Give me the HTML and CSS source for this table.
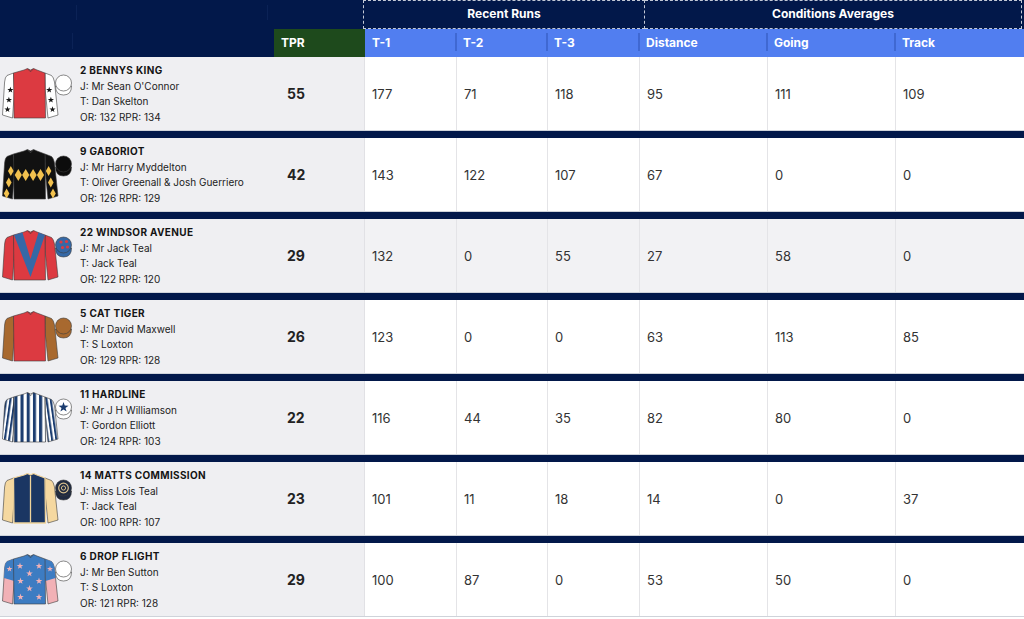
FILE: index.html
```html
<!DOCTYPE html>
<html lang="en">
<head>
<meta charset="utf-8">
<title>Runners</title>
<link rel="stylesheet" href="styles.css">
</head>
<body>
<svg class="defs" width="0" height="0" aria-hidden="true">
  <defs>
    <polygon id="star" points="0,-2.4 0.56,-0.77 2.28,-0.74 0.9,0.29 1.41,1.94 0,0.95 -1.41,1.94 -0.9,0.29 -2.28,-0.74 -0.56,-0.77"/>
    <pattern id="stripeB" patternUnits="userSpaceOnUse" x="12.3" y="0" width="6.2" height="60"><rect width="3.1" height="60" fill="#1c3d70"/></pattern>
    <pattern id="stripeL" patternUnits="userSpaceOnUse" width="4.2" height="60" patternTransform="rotate(8)"><rect width="2.1" height="60" fill="#1c3d70"/></pattern>
    <pattern id="stripeR" patternUnits="userSpaceOnUse" width="4.2" height="60" patternTransform="rotate(-8)"><rect width="2.1" height="60" fill="#1c3d70"/></pattern>
  </defs>
</svg>

<div class="board">
  <div class="groups">
    <div class="g-blank">
      <div class="g-part p1"></div>
      <div class="g-part p2"></div>
      <div class="g-part p3"></div>
    </div>
    <div class="group recent">Recent Runs</div>
    <div class="group cond">Conditions Averages</div>
  </div>

  <div class="grid cols">
    <div class="hc lead"><span class="hpart a"></span><span class="hpart b"></span></div>
    <div class="hc tpr">TPR</div>
    <div class="hc blue">T-1</div>
    <div class="hc blue sepl">T-2</div>
    <div class="hc blue sepl">T-3</div>
    <div class="hc blue sepl">Distance</div>
    <div class="hc blue sepl">Going</div>
    <div class="hc blue sepl">Track</div>
  </div>

  <!-- 1 -->
  <div class="grid row">
    <div class="lead-cell">
      <svg class="silk" viewBox="0 0 72 52" width="72" height="52">
        <g stroke="#3c3c3c" stroke-width=".6" stroke-linejoin="round">
          <path d="M11.5,5 L5,7.5 Q3,9 2.6,14 L0.5,47 L10.5,50 L12.5,22 Z" fill="#fff"/>
          <path d="M43,5 L49.5,7.5 Q51.5,9 52.5,14 L56,47 L46,50 L43.2,22 Z" fill="#fff"/>
          <path d="M11.5,5 L22,2 L25.5,0.5 L28.5,2 L31.5,0.5 L35,2 L43,5 L43.5,50 L12,50 Z" fill="#dc3a41"/>
          <path d="M25.5,0.8 L28.5,3.8 L31.5,0.8" fill="none"/>
          <path d="M53.5,18 Q53.5,27 61.5,27 Q69.5,27 69.5,18 Z" fill="#fff"/>
          <circle cx="61.5" cy="15" r="8" fill="#fff"/>
        </g>
        <g fill="#151515">
          <use href="#star" transform="translate(8.4 22) scale(1.35)"/>
          <use href="#star" transform="translate(6.9 32) scale(1.35)"/>
          <use href="#star" transform="translate(5.5 41.5) scale(1.35)"/>
          <use href="#star" transform="translate(47.2 22) scale(1.35)"/>
          <use href="#star" transform="translate(48.9 32) scale(1.35)"/>
          <use href="#star" transform="translate(50.5 41.5) scale(1.35)"/>
        </g>
      </svg>
      <div class="info">
        <span class="name">2 BENNYS KING</span>
        <span>J: Mr Sean O'Connor</span>
        <span>T: Dan Skelton</span>
        <span>OR: 132 RPR: 134</span>
      </div>
    </div>
    <div class="tpr-cell">55</div>
    <div class="val first">177</div>
    <div class="val">71</div>
    <div class="val">118</div>
    <div class="val">95</div>
    <div class="val">111</div>
    <div class="val">109</div>
  </div>
  <div class="sep"></div>

  <!-- 2 -->
  <div class="grid row">
    <div class="lead-cell">
      <svg class="silk" viewBox="0 0 72 52" width="72" height="52">
        <g stroke="#3c3c3c" stroke-width=".6" stroke-linejoin="round">
          <path d="M11.5,5 L5,7.5 Q3,9 2.6,14 L0.5,47 L10.5,50 L12.5,22 Z" fill="#111"/>
          <path d="M43,5 L49.5,7.5 Q51.5,9 52.5,14 L56,47 L46,50 L43.2,22 Z" fill="#111"/>
          <path d="M11.5,5 L22,2 L25.5,0.5 L28.5,2 L31.5,0.5 L35,2 L43,5 L43.5,50 L12,50 Z" fill="#111"/>
          <path d="M25.5,0.8 L28.5,3.8 L31.5,0.8" fill="none" stroke="#555"/>
          <path d="M53.5,18 Q53.5,27 61.5,27 Q69.5,27 69.5,18 Z" fill="#0c0c0c"/>
          <circle cx="61.5" cy="15" r="8" fill="#0c0c0c"/>
        </g>
        <g fill="#f2c14e">
          <path d="M16.3,20 L19.9,26 L16.3,32 L12.7,26 Z"/>
          <path d="M23.7,20 L27.3,26 L23.7,32 L20.1,26 Z"/>
          <path d="M31.1,20 L34.7,26 L31.1,32 L27.5,26 Z"/>
          <path d="M38.5,20 L42.1,26 L38.5,32 L34.9,26 Z"/>
          <path d="M8.8,17 L11.6,22 L8.8,27 L6,22 Z"/>
          <path d="M6.8,28.5 L9.6,33.5 L6.8,38.5 L4,33.5 Z"/>
          <path d="M4.6,39.5 L7.4,44.5 L4.6,49.5 L1.8,44.5 Z"/>
          <path d="M46.6,17 L49.4,22 L46.6,27 L43.8,22 Z"/>
          <path d="M48.8,28.5 L51.6,33.5 L48.8,38.5 L46,33.5 Z"/>
          <path d="M51,39.5 L53.8,44.5 L51,49.5 L48.2,44.5 Z"/>
        </g>
      </svg>
      <div class="info">
        <span class="name">9 GABORIOT</span>
        <span>J: Mr Harry Myddelton</span>
        <span>T: Oliver Greenall &amp; Josh Guerriero</span>
        <span>OR: 126 RPR: 129</span>
      </div>
    </div>
    <div class="tpr-cell">42</div>
    <div class="val first">143</div>
    <div class="val">122</div>
    <div class="val">107</div>
    <div class="val">67</div>
    <div class="val">0</div>
    <div class="val">0</div>
  </div>
  <div class="sep"></div>

  <!-- 3 -->
  <div class="grid row hover">
    <div class="lead-cell">
      <svg class="silk" viewBox="0 0 72 52" width="72" height="52">
        <g stroke="#3c3c3c" stroke-width=".6" stroke-linejoin="round">
          <path d="M11.5,5 L5,7.5 Q3,9 2.6,14 L0.5,47 L10.5,50 L12.5,22 Z" fill="#dc3a41"/>
          <path d="M43,5 L49.5,7.5 Q51.5,9 52.5,14 L56,47 L46,50 L43.2,22 Z" fill="#dc3a41"/>
          <path d="M11.5,5 L22,2 L25.5,0.5 L28.5,2 L31.5,0.5 L35,2 L43,5 L43.5,50 L12,50 Z" fill="#dc3a41"/>
          <path d="M12,5 L20.5,2.4 L28.5,29 L36.5,2.4 L43,5 L28.5,47 Z" fill="#3568a6" stroke="none"/>
          <path d="M25.5,0.8 L28.5,3.8 L31.5,0.8" fill="none"/>
          <path d="M53.5,18 Q53.5,27 61.5,27 Q69.5,27 69.5,18 Z" fill="#3568a6"/>
          <circle cx="61.5" cy="15" r="8" fill="#3568a6"/>
        </g>
        <g fill="#dc3a41">
          <circle cx="59" cy="12" r="1.6"/>
          <circle cx="64.5" cy="11.5" r="1.6"/>
          <circle cx="60.5" cy="17.5" r="1.6"/>
          <circle cx="65.5" cy="17" r="1.6"/>
        </g>
      </svg>
      <div class="info">
        <span class="name">22 WINDSOR AVENUE</span>
        <span>J: Mr Jack Teal</span>
        <span>T: Jack Teal</span>
        <span>OR: 122 RPR: 120</span>
      </div>
    </div>
    <div class="tpr-cell">29</div>
    <div class="val first">132</div>
    <div class="val">0</div>
    <div class="val">55</div>
    <div class="val">27</div>
    <div class="val">58</div>
    <div class="val">0</div>
  </div>
  <div class="sep"></div>

  <!-- 4 -->
  <div class="grid row">
    <div class="lead-cell">
      <svg class="silk" viewBox="0 0 72 52" width="72" height="52">
        <g stroke="#3c3c3c" stroke-width=".6" stroke-linejoin="round">
          <path d="M11.5,5 L5,7.5 Q3,9 2.6,14 L0.5,47 L10.5,50 L12.5,22 Z" fill="#a8692f"/>
          <path d="M43,5 L49.5,7.5 Q51.5,9 52.5,14 L56,47 L46,50 L43.2,22 Z" fill="#a8692f"/>
          <path d="M11.5,5 L22,2 L25.5,0.5 L28.5,2 L31.5,0.5 L35,2 L43,5 L43.5,50 L12,50 Z" fill="#dc3a41"/>
          <path d="M25.5,0.8 L28.5,3.8 L31.5,0.8" fill="none"/>
          <path d="M53.5,18 Q53.5,27 61.5,27 Q69.5,27 69.5,18 Z" fill="#a8692f"/>
          <circle cx="61.5" cy="15" r="8" fill="#a8692f"/>
        </g>
      </svg>
      <div class="info">
        <span class="name">5 CAT TIGER</span>
        <span>J: Mr David Maxwell</span>
        <span>T: S Loxton</span>
        <span>OR: 129 RPR: 128</span>
      </div>
    </div>
    <div class="tpr-cell">26</div>
    <div class="val first">123</div>
    <div class="val">0</div>
    <div class="val">0</div>
    <div class="val">63</div>
    <div class="val">113</div>
    <div class="val">85</div>
  </div>
  <div class="sep"></div>

  <!-- 5 -->
  <div class="grid row">
    <div class="lead-cell">
      <svg class="silk" viewBox="0 0 72 52" width="72" height="52">
        <path d="M11.5,5 L5,7.5 Q3,9 2.6,14 L0.5,47 L10.5,50 L12.5,22 Z" fill="#fff"/>
        <path d="M43,5 L49.5,7.5 Q51.5,9 52.5,14 L56,47 L46,50 L43.2,22 Z" fill="#fff"/>
        <path d="M11.5,5 L22,2 L25.5,0.5 L28.5,2 L31.5,0.5 L35,2 L43,5 L43.5,50 L12,50 Z" fill="#fff"/>
        <g stroke="#3c3c3c" stroke-width=".6" stroke-linejoin="round">
          <path d="M11.5,5 L5,7.5 Q3,9 2.6,14 L0.5,47 L10.5,50 L12.5,22 Z" fill="url(#stripeL)"/>
          <path d="M43,5 L49.5,7.5 Q51.5,9 52.5,14 L56,47 L46,50 L43.2,22 Z" fill="url(#stripeR)"/>
          <path d="M11.5,5 L22,2 L25.5,0.5 L28.5,2 L31.5,0.5 L35,2 L43,5 L43.5,50 L12,50 Z" fill="url(#stripeB)"/>
          <path d="M25.5,0.8 L28.5,3.8 L31.5,0.8" fill="none"/>
          <path d="M53.5,18 Q53.5,27 61.5,27 Q69.5,27 69.5,18 Z" fill="#fff"/>
          <circle cx="61.5" cy="15" r="8" fill="#fff"/>
        </g>
        <use href="#star" fill="#1c3d70" transform="translate(61.5 15.3) scale(2.2)"/>
      </svg>
      <div class="info">
        <span class="name">11 HARDLINE</span>
        <span>J: Mr J H Williamson</span>
        <span>T: Gordon Elliott</span>
        <span>OR: 124 RPR: 103</span>
      </div>
    </div>
    <div class="tpr-cell">22</div>
    <div class="val first">116</div>
    <div class="val">44</div>
    <div class="val">35</div>
    <div class="val">82</div>
    <div class="val">80</div>
    <div class="val">0</div>
  </div>
  <div class="sep"></div>

  <!-- 6 -->
  <div class="grid row">
    <div class="lead-cell">
      <svg class="silk" viewBox="0 0 72 52" width="72" height="52">
        <g stroke="#3c3c3c" stroke-width=".6" stroke-linejoin="round">
          <path d="M11.5,5 L5,7.5 Q3,9 2.6,14 L0.5,47 L10.5,50 L12.5,22 Z" fill="#f5d8a0"/>
          <path d="M43,5 L49.5,7.5 Q51.5,9 52.5,14 L56,47 L46,50 L43.2,22 Z" fill="#f5d8a0"/>
          <path d="M11.5,5 L22,2 L25.5,0.5 L28.5,2 L31.5,0.5 L35,2 L43,5 L43.5,50 L12,50 Z" fill="#1b3663" stroke="#f0d39a" stroke-width="1.3"/>
          <path d="M28.5,3 L28.5,49.5" stroke="#f0d39a" stroke-width="1.3"/>
          <path d="M53.5,18 Q53.5,27 61.5,27 Q69.5,27 69.5,18 Z" fill="#1f2a40"/>
          <circle cx="61.5" cy="15" r="8" fill="#1f2a40"/>
        </g>
        <circle cx="61.5" cy="15" r="4.8" fill="none" stroke="#d9c08c" stroke-width="1.2"/>
        <circle cx="61.5" cy="15" r="2.1" fill="none" stroke="#d9c08c" stroke-width="1"/>
      </svg>
      <div class="info">
        <span class="name">14 MATTS COMMISSION</span>
        <span>J: Miss Lois Teal</span>
        <span>T: Jack Teal</span>
        <span>OR: 100 RPR: 107</span>
      </div>
    </div>
    <div class="tpr-cell">23</div>
    <div class="val first">101</div>
    <div class="val">11</div>
    <div class="val">18</div>
    <div class="val">14</div>
    <div class="val">0</div>
    <div class="val">37</div>
  </div>
  <div class="sep"></div>

  <!-- 7 -->
  <div class="grid row">
    <div class="lead-cell">
      <svg class="silk" viewBox="0 0 72 52" width="72" height="52">
        <g stroke="#3c3c3c" stroke-width=".6" stroke-linejoin="round">
          <path d="M11.5,5 L5,7.5 Q3,9 2.6,14 L0.5,47 L10.5,50 L12.5,22 Z" fill="#f1b1b6"/>
          <path d="M43,5 L49.5,7.5 Q51.5,9 52.5,14 L56,47 L46,50 L43.2,22 Z" fill="#f1b1b6"/>
          <path d="M11.5,5 L5,7.5 Q3,9 2.6,14 L2,24 L12.3,27 L12.5,22 Z" fill="#3d7cc2" stroke="none"/>
          <path d="M43,5 L49.5,7.5 Q51.5,9 52.5,14 L53.6,24 L43.4,27 L43.2,22 Z" fill="#3d7cc2" stroke="none"/>
          <path d="M11.5,5 L22,2 L25.5,0.5 L28.5,2 L31.5,0.5 L35,2 L43,5 L43.5,50 L12,50 Z" fill="#3d7cc2"/>
          <path d="M25.5,0.8 L28.5,3.8 L31.5,0.8" fill="none"/>
          <path d="M53.5,18 Q53.5,27 61.5,27 Q69.5,27 69.5,18 Z" fill="#fff"/>
          <circle cx="61.5" cy="15" r="8" fill="#fff"/>
        </g>
        <g fill="#f1b1b6">
          <use href="#star" transform="translate(18 12) scale(1.45)"/>
          <use href="#star" transform="translate(37 12) scale(1.45)"/>
          <use href="#star" transform="translate(27.5 19.5) scale(1.45)"/>
          <use href="#star" transform="translate(18.5 27) scale(1.45)"/>
          <use href="#star" transform="translate(37 27) scale(1.45)"/>
          <use href="#star" transform="translate(27.5 34.5) scale(1.45)"/>
          <use href="#star" transform="translate(18.5 43) scale(1.45)"/>
          <use href="#star" transform="translate(37 43) scale(1.45)"/>
          <use href="#star" transform="translate(7.5 15) scale(1.3)"/>
          <use href="#star" transform="translate(48 15) scale(1.3)"/>
        </g>
      </svg>
      <div class="info">
        <span class="name">6 DROP FLIGHT</span>
        <span>J: Mr Ben Sutton</span>
        <span>T: S Loxton</span>
        <span>OR: 121 RPR: 128</span>
      </div>
    </div>
    <div class="tpr-cell">29</div>
    <div class="val first">100</div>
    <div class="val">87</div>
    <div class="val">0</div>
    <div class="val">53</div>
    <div class="val">50</div>
    <div class="val">0</div>
  </div>
</div>
</body>
</html>
```

FILE: styles.css
```css
* { box-sizing: border-box; }

html, body {
  margin: 0;
  padding: 0;
  background: #ffffff;
}

body {
  font-family: "Inter", "Liberation Sans", Arial, sans-serif;
  color: #222;
}

.defs {
  display: block;
  width: 0;
  height: 0;
  overflow: hidden;
}

.board {
  width: 1024px;
}

/* ---------- header: groups ---------- */
.groups {
  display: flex;
  height: 29px;
  background: #02184a;
}

.g-blank {
  width: 363px;
  display: flex;
}

.g-part {
  height: 100%;
  display: flex;
  align-items: center;
}

.g-part.p1 { width: 76px; }
.g-part.p2 { width: 191px; border-left: 1px solid #0b2256; margin: 5px 0 9px; height: auto; }
.g-part.p3 { flex: 1; border-left: 1px solid #0b2256; margin: 5px 0 9px; height: auto; }

.group {
  height: 29px;
  border: 1px dashed #c3c9d6;
  display: flex;
  align-items: center;
  justify-content: center;
  color: #fff;
  font-weight: 700;
  font-size: 12px;
  padding-bottom: 2px;
}

.group.recent { width: 282px; }
.group.cond { width: 377px; border-left: none; }

/* ---------- grid ---------- */
.grid {
  display: grid;
  grid-template-columns: 274px 91px 91px 91px 92px 128px 128px 129px;
}

.cols {
  height: 28px;
}

.hc {
  display: flex;
  align-items: center;
  padding-left: 7px;
  font-size: 12px;
  font-weight: 700;
  color: #fff;
  padding-bottom: 2px;
}

.hc.lead {
  background: #02184a;
  padding-left: 0;
}

.hpart.a {
  width: 72px;
}

.hpart.b {
  align-self: stretch;
  margin: 4px 0 6px;
  border-left: 1px solid #0b2256;
}

.hc.tpr {
  background: #1e4a1c;
}

.hc.blue {
  background: #517ef0;
  position: relative;
}

.hc.blue.sepl::before {
  content: "";
  position: absolute;
  left: -1px;
  top: 4px;
  bottom: 6px;
  width: 2px;
  background: #3f68d2;
}

/* ---------- rows ---------- */
.row {
  height: 74px;
  border-bottom: 1px solid #cfd3da;
}

.sep {
  height: 7px;
  background: #02184a;
}

.lead-cell {
  background: #efeff2;
  display: flex;
  align-items: center;
  gap: 6px;
  padding-left: 2px;
}

.silk {
  display: block;
  flex: none;
}

.info {
  display: flex;
  flex-direction: column;
  font-size: 10px;
  line-height: 15.5px;
  color: #222;
  padding-top: 1px;
}

.name {
  font-weight: 700;
  letter-spacing: 0.35px;
  color: #141414;
}

.tpr-cell {
  background: #efeff2;
  border-right: 1px solid #e1e1e5;
  display: flex;
  align-items: center;
  padding-left: 13px;
  font-size: 14px;
  font-weight: 700;
  color: #222;
}

.val {
  background: #fff;
  border-left: 1px solid #e4e4e7;
  display: flex;
  align-items: center;
  padding-left: 7px;
  font-size: 13px;
  color: #333;
}

.val.first {
  border-left: none;
}

.row.hover .val {
  background: #f2f2f4;
}
```
